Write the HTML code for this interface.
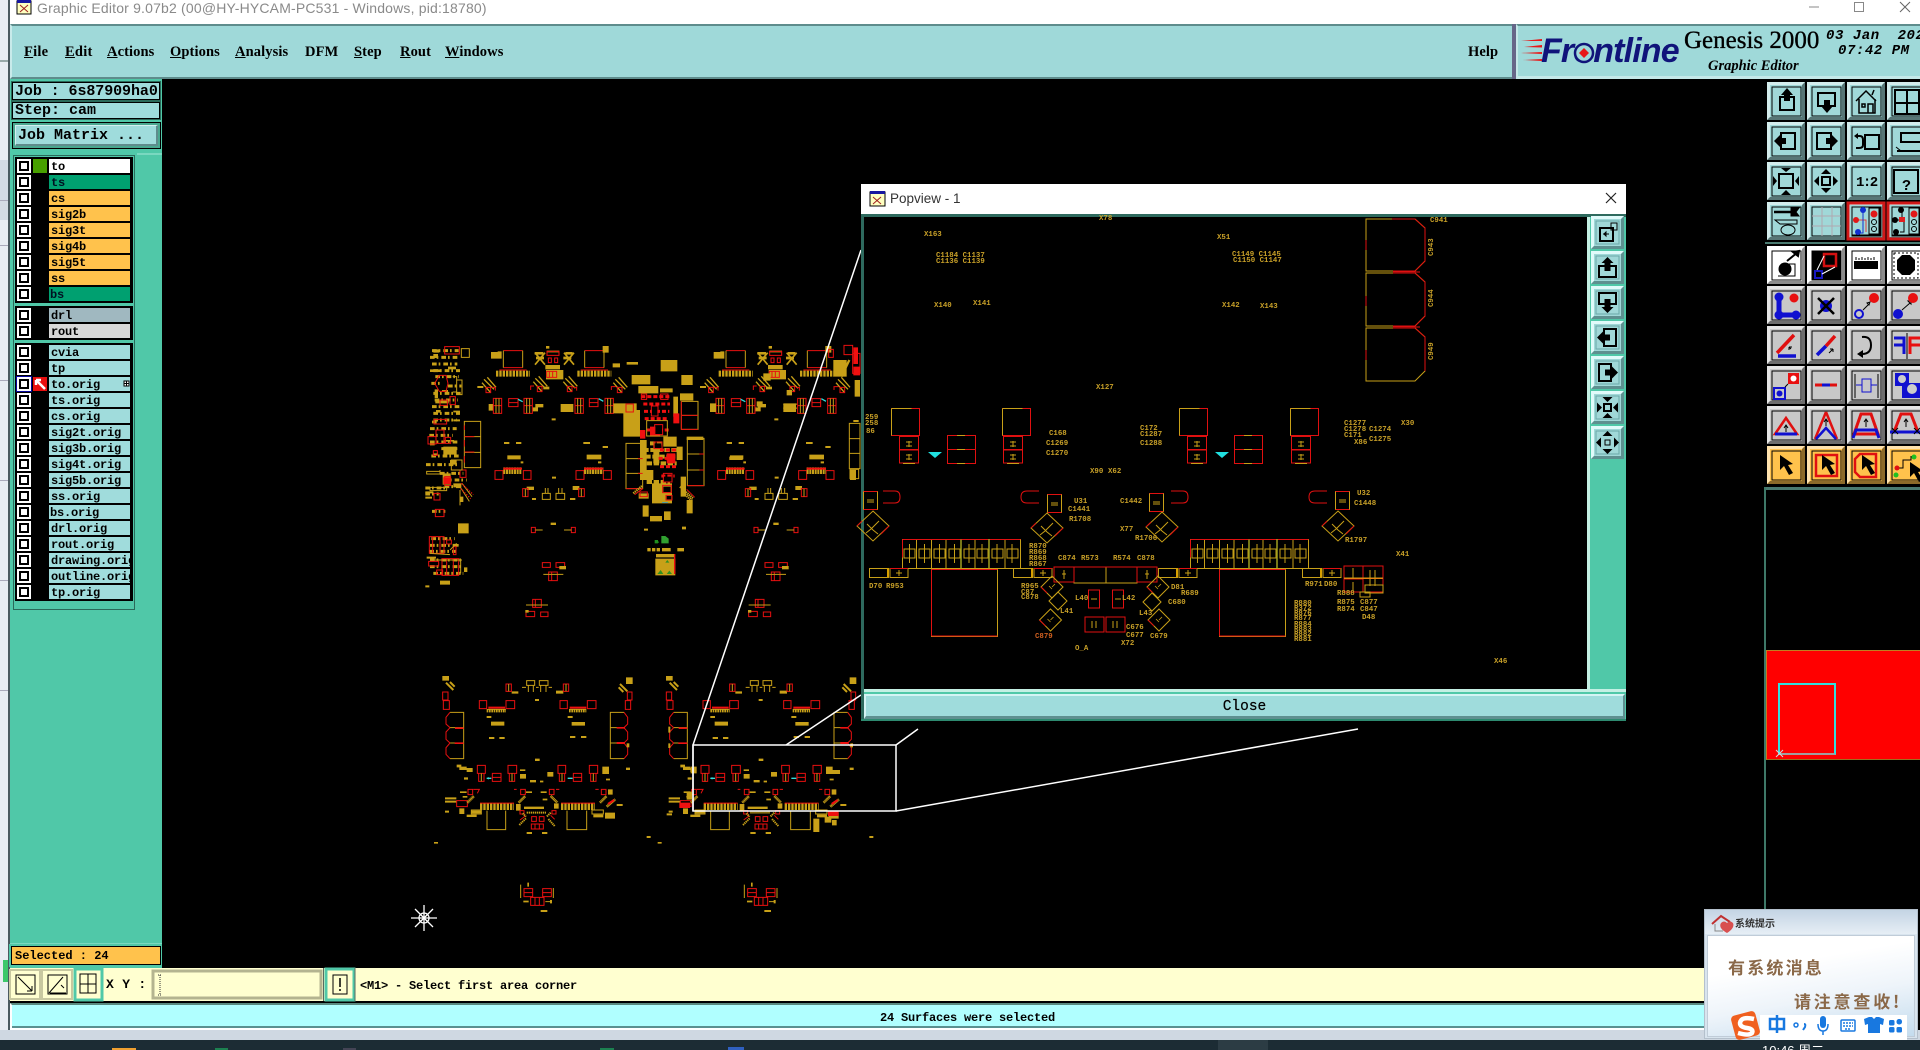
<!DOCTYPE html>
<html><head><meta charset="utf-8"><title>Graphic Editor</title>
<style>
html,body{margin:0;padding:0;background:#000;width:1920px;height:1050px;overflow:hidden}
div,span{position:absolute;box-sizing:border-box}
#root{left:0;top:0;width:1920px;height:1050px;overflow:hidden;background:#000}
.m{font-family:"Liberation Mono",monospace;font-weight:bold;color:#000;white-space:pre}
.s{font-family:"Liberation Serif",serif;font-weight:bold;color:#000;white-space:pre}
.u{position:static;text-decoration:underline}
.c{width:14px;height:14px;background:#fff;left:17px}
.c:after{content:"";position:absolute;left:2px;top:2px;width:10px;height:10px;border:2px solid #000;background:#fff;box-sizing:border-box}
.n{left:49px;width:81px;height:14px;font-size:12px;line-height:16px;padding-left:2px;letter-spacing:-.2px;overflow:hidden;background:#a0dcdc}
.o{background:#ffc24c}
.g{background:#00a070;color:#012}
svg{position:absolute;left:0;top:0}
.y{fill:none;stroke:#c8a018;stroke-width:3}
.r{fill:none;stroke:#e81010;stroke-width:3}
.Y{fill:#c8a018}.R{fill:#f01010}
.t text{font-family:"Liberation Mono",monospace;font-weight:bold;font-size:7.4px;fill:#c8a028}
.a{fill:none;stroke:#000;stroke-width:2}
.k{fill:#000}
.e{fill:none;stroke:#c8a018;stroke-width:1}
.f{fill:none;stroke:#e01010;stroke-width:1}
</style></head><body>
<div id="root">
<!-- desktop sliver -->
<div style="left:0;top:0;width:8px;height:1040px;background:#e8edf3"></div>
<div style="left:0;top:60px;width:8px;height:2px;background:#9aa"></div>
<div style="left:0;top:160px;width:8px;height:60px;background:#d4dbe4"></div>
<div style="left:0;top:245px;width:8px;height:1px;background:#aab"></div>
<div style="left:0;top:200px;width:8px;height:1px;background:#aab"></div>
<div style="left:0;top:380px;width:8px;height:1px;background:#aab"></div>
<div style="left:0;top:480px;width:8px;height:1px;background:#aab"></div>
<div style="left:0;top:580px;width:8px;height:1px;background:#aab"></div>
<div style="left:0;top:690px;width:8px;height:1px;background:#aab"></div>
<div style="left:3px;top:960px;width:5px;height:22px;background:#3cc86a"></div>
<div style="left:8px;top:0;width:2px;height:1032px;background:#4a5a60"></div>
<div style="left:0;top:1030px;width:1920px;height:10px;background:#cfd8e2"></div>
<!-- taskbar -->
<div style="left:0;top:1040px;width:1920px;height:10px;background:#1c2c34"></div>
<div style="left:112px;top:1048px;width:24px;height:2px;background:#f0a030"></div>
<div style="left:215px;top:1048px;width:13px;height:2px;background:#1c8050"></div>
<div style="left:343px;top:1048px;width:13px;height:2px;background:#445"></div>
<div style="left:600px;top:1048px;width:14px;height:2px;background:#1c8050"></div>
<div style="left:728px;top:1047px;width:16px;height:3px;background:#3060c0"></div>
<div style="left:1218px;top:1040px;width:50px;height:10px;background:#2c3c44"></div>
<div style="left:1762px;top:1042px;font:13px/18px 'Liberation Sans','Noto Sans CJK SC',sans-serif;color:#fff;white-space:pre">10:46 周二</div>
<!-- title bar -->
<div style="left:10px;top:0;width:1910px;height:24px;background:#fff"></div>
<svg width="1920" height="30"><rect x="17" y="1" width="14" height="13" fill="#ffffc0" stroke="#000"/><rect x="17" y="0" width="14" height="3" fill="#1818a0"/><path d="M20 5l8 7M28 5l-8 7" stroke="#a02020" fill="none"/><path d="M1809 7h10" stroke="#888"/><rect x="1854.500" y="2.500" width="9" height="9" fill="none" stroke="#888"/><path d="M1900 2l10 10M1910 2l-10 10" stroke="#666"/></svg>
<div style="left:37px;top:0;height:16px;font:14px/16px 'Liberation Sans',sans-serif;color:#8a8a8a;white-space:pre;letter-spacing:.18px">Graphic Editor 9.07b2 (00@HY-HYCAM-PC531 - Windows, pid:18780)</div>
<!-- menu bar -->
<div style="left:10px;top:24px;width:1505px;height:55px;background:#9fd9d9;border:2px solid #5e8c8c;border-left:2px solid #c8eaea;border-bottom:2px solid #5e8c8c"></div>
<div style="left:1512px;top:24px;width:4px;height:55px;background:#668"></div>
<div style="left:1516px;top:24px;width:404px;height:55px;background:#9fd9d9;border-top:2px solid #5e8c8c;border-bottom:3px solid #c4e8e8;border-left:2px solid #c4e8e8"></div>
<div class="s" style="left:24px;top:43px;font-size:14.500px;line-height:18px;letter-spacing:.25px"><span class="u">F</span>ile</div>
<div class="s" style="left:65px;top:43px;font-size:14.500px;line-height:18px;letter-spacing:.25px"><span class="u">E</span>dit</div>
<div class="s" style="left:107px;top:43px;font-size:14.500px;line-height:18px;letter-spacing:.1px"><span class="u">A</span>ctions</div>
<div class="s" style="left:170px;top:43px;font-size:14.500px;line-height:18px;letter-spacing:.1px"><span class="u">O</span>ptions</div>
<div class="s" style="left:235px;top:43px;font-size:14.500px;line-height:18px;letter-spacing:.1px"><span class="u">A</span>nalysis</div>
<div class="s" style="left:305px;top:43px;font-size:14.500px;line-height:18px;letter-spacing:.1px">DFM</div>
<div class="s" style="left:354px;top:43px;font-size:14.500px;line-height:18px;letter-spacing:.1px"><span class="u">S</span>tep</div>
<div class="s" style="left:400px;top:43px;font-size:14.500px;line-height:18px;letter-spacing:.1px"><span class="u">R</span>out</div>
<div class="s" style="left:445px;top:43px;font-size:14.500px;line-height:18px;letter-spacing:.1px"><span class="u">W</span>indows</div>
<div class="s" style="left:1468px;top:43px;font-size:14.500px;line-height:18px;letter-spacing:.1px">Help</div>
<!-- logo -->
<div style="left:1541px;top:32px;font:italic bold 34px/38px 'Liberation Sans',sans-serif;color:#10147a;letter-spacing:-.85px;white-space:pre">Frontline</div>
<svg width="1920" height="90"><path d="M1521 41l21-2v2zM1524 47l18-2v2.500zM1521 53l21-1v2zM1523 60l19-1v2z" fill="#e81818"/><circle cx="1584" cy="53" r="9" fill="#9fd9d9" stroke="#10147a" stroke-width="2.500"/><path d="M1584 48l5 5-5 5-5-5z" fill="#e81818"/></svg>
<div style="left:1684px;top:26px;font:25px/30px 'Liberation Serif',serif;color:#000;white-space:pre;-webkit-text-stroke:.35px #000">Genesis 2000</div>
<div class="s" style="left:1708px;top:57px;font-size:14.500px;line-height:18px;font-style:italic">Graphic Editor</div>
<div class="m" style="left:1826px;top:28px;font-size:14px;line-height:16px;font-style:italic;letter-spacing:.55px">03 Jan  2024</div>
<div class="m" style="left:1838px;top:43px;font-size:14px;line-height:16px;font-style:italic;letter-spacing:.55px">07:42 PM</div>
<!-- left panel -->
<div style="left:10px;top:79px;width:152px;height:890px;background:#50c8a8"></div>
<div class="m" style="left:12px;top:82px;width:148px;height:18px;background:#9fdcdc;border:1px solid #000;outline:1px solid #2a6a5a;font-size:15px;line-height:17px;padding-left:2px;letter-spacing:-.08px">Job : 6s87909ha0</div>
<div class="m" style="left:12px;top:102px;width:148px;height:17px;background:#9fdcdc;border:1px solid #000;outline:1px solid #2a6a5a;font-size:15px;line-height:16px;padding-left:2px">Step: cam</div>
<div style="left:12px;top:122px;width:149px;height:27px;background:#4aa890;border:1px solid #000"></div>
<div class="m" style="left:15px;top:125px;width:143px;height:21px;background:#9fdcdc;border-top:1px solid #d4f0f0;border-left:1px solid #d4f0f0;border-right:2px solid #5e8c8c;border-bottom:2px solid #5e8c8c;font-size:15px;line-height:20px;padding-left:2px">Job Matrix ...</div>
<div style="left:13px;top:155px;width:122px;height:455px;background:#50c8a8;border:1px solid #2a6a5a"></div>
<div style="left:15px;top:157px;width:118px;height:146px;background:#000"></div>
<div style="left:15px;top:306px;width:118px;height:34px;background:#000"></div>
<div style="left:15px;top:343px;width:118px;height:258px;background:#000"></div>
<div style="left:137px;top:153px;width:25px;height:792px;background:#50c8a8;border-top:2px solid #7ad8c0"></div>
<div class="c" style="top:159px"></div><div style="left:33px;top:159px;width:14px;height:14px;background:#48a000"></div><div class="n m" style="top:159px;background:#fff">to</div>
<div class="c" style="top:175px"></div><div class="n m g" style="top:175px">ts</div>
<div class="c" style="top:191px"></div><div class="n m o" style="top:191px">cs</div>
<div class="c" style="top:207px"></div><div class="n m o" style="top:207px">sig2b</div>
<div class="c" style="top:223px"></div><div class="n m o" style="top:223px">sig3t</div>
<div class="c" style="top:239px"></div><div class="n m o" style="top:239px">sig4b</div>
<div class="c" style="top:255px"></div><div class="n m o" style="top:255px">sig5t</div>
<div class="c" style="top:271px"></div><div class="n m o" style="top:271px">ss</div>
<div class="c" style="top:287px"></div><div class="n m g" style="top:287px;padding-left:1px">bs</div>
<div class="c" style="top:308px"></div><div class="n m" style="top:308px;background:#a0b8c0">drl</div>
<div class="c" style="top:324px"></div><div class="n m" style="top:324px;background:#d8d8d8">rout</div>
<div class="c" style="top:345px"></div><div class="n m" style="top:345px">cvia</div>
<div class="c" style="top:361px"></div><div class="n m" style="top:361px">tp</div>
<div style="left:16px;top:376px;width:16px;height:16px;background:#0808a0"></div><div class="c" style="top:377px"></div><div style="left:33px;top:377px;width:14px;height:14px;background:#e81010"></div><div class="n m" style="top:377px">to.orig</div>
<div class="c" style="top:393px"></div><div class="n m" style="top:393px">ts.orig</div>
<div class="c" style="top:409px"></div><div class="n m" style="top:409px">cs.orig</div>
<div class="c" style="top:425px"></div><div class="n m" style="top:425px">sig2t.orig</div>
<div class="c" style="top:441px"></div><div class="n m" style="top:441px">sig3b.orig</div>
<div class="c" style="top:457px"></div><div class="n m" style="top:457px">sig4t.orig</div>
<div class="c" style="top:473px"></div><div class="n m" style="top:473px">sig5b.orig</div>
<div class="c" style="top:489px"></div><div class="n m" style="top:489px">ss.orig</div>
<div class="c" style="top:505px"></div><div class="n m" style="top:505px;padding-left:1px">bs.orig</div>
<div class="c" style="top:521px"></div><div class="n m" style="top:521px">drl.orig</div>
<div class="c" style="top:537px"></div><div class="n m" style="top:537px">rout.orig</div>
<div class="c" style="top:553px"></div><div class="n m" style="top:553px">drawing.orig</div>
<div class="c" style="top:569px"></div><div class="n m" style="top:569px">outline.orig</div>
<div class="c" style="top:585px"></div><div class="n m" style="top:585px">tp.orig</div>
<svg width="140" height="400" style="z-index:2"><path d="M36 380l9 9M36 380h5M36 380v5" stroke="#fff" stroke-width="2.500" fill="none"/><path d="M124 381h5v5h-5zM126.500 381v5M124 383.500h5" stroke="#000" fill="#fff"/></svg>
<div style="left:10px;top:943px;width:152px;height:2px;background:#7ad8c0"></div>
<div class="m o" style="left:11px;top:946px;width:150px;height:19px;border:1px solid #000;font-size:12px;line-height:18px;padding-left:3px;outline:2px solid #50c8a8">Selected : 24</div>
<!-- canvas -->
<div style="left:162px;top:79px;width:1602px;height:889px;background:#000"></div>
<svg width="1920" height="1050" style="left:0;top:0">
<defs>
<g id="bar"><path class="r" d="M22 2h58M22 53h58"/><path class="y" d="M22 2v51M80 2v51"/><path d="M0 71h102" fill="none" stroke="#c8a018" stroke-width="18" stroke-dasharray="7 3"/><path class="r" d="M10 60h82"/></g>
<g id="bx"><path class="r" d="M0 22v23h25v-23M0 0h25v22H0z"/><path class="y" d="M8 0v45M17 0v45"/></g>
<g id="cross"><path d="M0 0l30 30M10 -6l26 30M-6 10l26 30" stroke="#c8a018" stroke-width="4" fill="none"/><path class="r" d="M6 24h14v16H6z"/></g>
<g id="U">
<use href="#bar" x="228" y="60"/><use href="#bar" x="472" y="60"/>
<path class="Y" d="M213 66h20v20h-20zM233 64h12v22h-12zM548 48h18v20h-18zM578 100h22v12h-22zM206 222h14v20h-14zM346 222h24v10h-24zM338 232h16v12h-16zM422 222h38v24h-38z"/>
<path class="Y" d="M344 66h26v8h-26zM348 80h24v8h-24zM430 80h24v8h-24zM436 66h22v8h-22zM378 48h10v8h-10zM380 62h38v5h-38zM376 105h44v13h-44zM378 120h52v28h-52zM172 168h18v6h-18zM370 170h18v8h-18zM395 265h12v6h-12zM396 440h12v6h-12zM392 578h16v7h-16zM252 336h16v6h-16zM288 336h16v6h-16zM490 336h20v6h-20zM548 348h16v6h-16zM262 376h40v12h-40zM500 374h44v14h-44zM302 394h8v6h-8zM534 394h10v6h-10zM320 470h22v10h-22zM458 468h20v12h-20zM336 504h12v6h-12zM450 504h16v6h-16z"/>
<g transform="translate(345 68)"><path d="M0 0l30 36M30 0L0 36" stroke="#c8a018" stroke-width="5" fill="none"/></g>
<g transform="translate(432 68)"><path d="M0 0l30 36M30 0L0 36" stroke="#c8a018" stroke-width="5" fill="none"/></g>
<use href="#cross" x="346" y="145"/><use href="#cross" x="436" y="145"/><use href="#cross" x="192" y="148"/><use href="#cross" x="586" y="148"/>
<path class="r" d="M381 64h36v12h-36zM385 84h9v14h-9zM404 84h9v14h-9zM380 124h30v18h-30zM388 124v18M398 124v18M332 180v-12h10M216 172h10v10M460 172h10v10M574 180v-10h14"/>
<use href="#bx" x="220" y="205"/><use href="#bx" x="312" y="205"/><use href="#bx" x="465" y="205"/><use href="#bx" x="555" y="205"/>
<path class="r" d="M266 206h28v24h-28zM266 218h28M508 206h26v24h-26zM508 218h26M225 422h24v26h-24zM310 422h23v26h-23zM468 422h24v26h-24zM550 422h24v26h-24z"/>
<path d="M294 208l14 7M536 206l14 8" stroke="#30e0e0" stroke-width="4"/>
<path d="M250 422h56M492 422h58" stroke="#c8a018" stroke-width="20" stroke-dasharray="6 2"/>
<path d="M250 416h56M492 416h58" stroke="#f01010" stroke-width="6"/>
<path class="r" d="M308 476h16v24h-16zM476 476h17v24h-17z"/><path class="y" d="M316 476v24M484 476v24M367 490h24v18h-24zM408 490h26v18h-26zM376 474v16M384 474v16M416 474v16M426 474v16"/>
<path class="r" d="M334 592h12v16h-12zM454 592h12v16h-12z"/><path class="y" d="M346 600h22M432 600h22"/>
<path class="r" d="M367 698h24v14h-24zM408 698h26v14h-26zM386 726h26v26h-26zM395 726v26"/><path class="y" d="M370 733h60"/><path class="Y" d="M418 708h20v10h-20z"/>
<path class="r" d="M338 808h26v24h-26zM346 808v24M318 844h26v16h-26zM362 846h22v14h-22z"/><path class="y" d="M318 825h66"/><path class="Y" d="M316 840h10v8h-10z"/>
</g>
<g id="B">
<path class="Y" d="M67 48h20v14h-20zM618 52h20v20h-20zM275 94h20v7h-20zM408 92h22v9h-22zM200 168h14v6h-14zM213 185h40v12h-40zM207 231h16v6h-16zM238 231h16v6h-16zM345 117h12v6h-12zM443 168h15v6h-15zM455 186h40v11h-40zM450 228h16v6h-16zM483 228h16v6h-16zM345 296h14v7h-14zM110 314h14v8h-14zM118 320h22v10h-22zM140 324h18v12h-18zM132 352h12v7h-12zM300 328h16v5h-16zM300 342h18v14h-18zM330 360h18v7h-18zM360 362h10v5h-10zM382 336h18v14h-18zM547 320h20v22h-20zM558 356h12v5h-12zM618 323h12v7h-12zM120 394h20v5h-20zM128 408h14v5h-14zM318 394h18v5h-18zM362 394h18v5h-18zM368 416h14v5h-14zM564 388h14v16h-14zM75 412h34v6h-34zM75 422h34v6h-34zM118 445h15v17h-15zM75 452h12v6h-12zM154 452h30v8h-30zM140 464h30v7h-30zM288 432h14v20h-14zM312 440h60v7h-60zM402 430h14v16h-14zM520 464h30v8h-30zM555 458h30v18h-30zM320 516h16v6h-16zM366 516h16v6h-16zM590 432h18v6h-18zM42 546h12v5h-12zM362 750h20v6h-20zM322 668h5v12h-5zM390 720h6v10h-6zM310 722h16v5h-16z"/>
<path d="M78 68l22 22M90 66l14 14M600 72l22 22M596 82l14 14" stroke="#c8a018" stroke-width="6" fill="none"/>
<path class="r" d="M68 96h16v24h-16zM70 122h18v26H70zM622 96v24h14v-24zM616 122h16v26h-16zM258 72h16v22h-16zM430 72h16v22h-16zM178 122h22v24h-22zM258 122h26v24h-26zM420 122h22v24h-22zM502 122h26v24h-26zM172 316h24v24h-24zM264 316h26v24h-26zM414 316h23v24h-23zM508 316h25v24h-25zM217 340h26v24h-26zM460 340h25v24h-25zM217 352h26M460 352h25M176 340h16v24h-16zM268 340h16v24h-16zM418 340h16v24h-16zM512 340h16v24h-16z"/>
<path class="y" d="M266 72v22M438 72v22M184 340v24M276 340v24M426 340v24M520 340v24M204 148h52M448 148h50M320 62h24v14h-24zM358 62h26v14h-26zM325 76v20M340 76v20M362 76v20M378 76v20M306 82h12M348 82h8M386 82h10"/>
<path class="R" d="M205 140h50v6h-50zM449 140h50v6h-50z"/>
<path d="M200 152h58M447 152h52" stroke="#c8a018" stroke-width="10" stroke-dasharray="5 2"/>
<path class="y" d="M90 157h41v46H90M90 203h41v46H90M90 249h41v47H90"/><path class="r" d="M90 157L78 172v20l12 11M90 203L78 216v22l12 11M90 249l-12 14v20l12 13"/>
<path class="y" d="M612 157h-41v46h41M612 203h-41v46h41M612 249h-41v47h41"/><path class="r" d="M612 157l11 15v20l-11 11M612 203l11 13v22l-11 11M612 249l11 14v20l-11 13"/>
<path class="R" d="M105 202h26v5h-26zM104 247h27v5h-27zM590 201h25v5h-25zM590 246h25v6h-25z"/><path class="Y" d="M620 250h8v12h-8z"/>
<path d="M200 355h14M443 355h15" stroke="#30e0e0" stroke-width="4"/><path d="M200 355l6-4v8z" fill="#30e0e0"/>
<path class="r" d="M144 388h14v16h-14zM282 388h8M302 388h14v16h-14zM388 388h14v16h-14zM408 388h10M526 388h10M544 388h14v16h-14zM160 388h18l-6 12M110 422h32v18h-32z"/>
<path d="M142 428l20-20M296 428l20-20M392 408l20 20M540 428l20-20M560 440l26-22" stroke="#c8a018" stroke-width="8" stroke-dasharray="3 1" fill="none"/>
<path d="M564 432l18-12" stroke="#f01010" stroke-width="6"/>
<path d="M180 440h102M423 440h102" stroke="#c8a018" stroke-width="20" stroke-dasharray="7 3"/><path class="R" d="M180 428h102v3h-102zM423 428h102v3h-102z"/>
<path class="y" d="M201 452v57h56v-57M441 452v57h59v-57M154 450h30v12h-30zM516 450h34v12h-34z"/>
<path class="r" d="M300 452h12v10h-12zM396 452h12v10h-12zM335 470h14v14h-14zM358 470h14v14h-14zM334 492h36v15h-36zM345 492v15M358 492v15M300 480l16-12M404 478l-12-12"/>
<path d="M298 495l20-20M404 498l-20-22M308 460l10 10M392 458l-12 12M320 458h60" stroke="#c8a018" stroke-width="6" stroke-dasharray="4 2" fill="none"/>
<path class="r" d="M312 686h26v24h-26zM312 698h26M368 686h26v24h-26zM368 698h26M332 712h40v24h-40zM345 712v24M358 712v24"/><path class="y" d="M302 674v40M400 684v30M376 725h18"/>
</g>
</defs>
<!-- top boards -->
<g transform="translate(420 330) scale(.33333)">
<use href="#U"/><use href="#U" x="668"/>
<!-- left column -->
<path d="M36 62h80M30 82h84M36 102h76M40 122h80M46 140h70M34 160h26M84 168h40M40 190h84M44 210h70M36 230h84M40 250h80M40 270h70M30 296h80M28 316h70M30 336h84M64 356h50M34 378h86M18 404h100M60 430h70M70 450h70M16 474h64M16 492h40M74 470h50M36 544h40M34 626h70M30 646h84M28 664h80M30 690h100M30 710h100M40 730h90" fill="none" stroke="#c8a018" stroke-width="9" stroke-dasharray="14 6 5 9"/>
<path class="Y" d="M40 58h18v10H40zM30 118h30v8H30zM40 72h14v12H40zM84 110h24v8H84zM44 178h10v26H44zM66 180h18v6H66zM46 212h40v8H46zM48 240h14v8H48zM100 242h20v5h-20zM36 272h14v8H36zM100 268h20v6h-20zM72 330h30v5H72zM30 340h14v6H30zM70 350h40v24H70zM40 370h14v6H40zM90 390h20v14H90zM68 430h24v34H68zM100 460h24v12h-24zM16 484h24v6H16zM16 500h20v6H16zM120 500h10v16h-10zM114 580h32v30h-32zM20 680h28v6H20zM60 752h30v12H60zM16 766h12v6H16zM132 712h10v14h-10zM104 642h12v8h-12z"/>
<path class="r" d="M74 50h44v22H74zM44 160l14-24h20l6 24-6 24H58zM60 210h22v16H60zM90 200h16v24H90zM42 268h38v14H42zM24 320h24v22H24zM48 300h24v40H48zM76 322h16v18H76zM40 362h12v14H40zM74 440h18v26H74zM120 420h18v22h-18zM42 490h18v20H42zM46 538h26v22H46zM28 620h44v50H28zM38 620v50M60 620v50M80 630h14v12H80zM100 650h8v24h-8zM26 694h30v14H26zM66 686h50v50H66zM80 686v50M100 686v50M50 720h18v14H50z"/>
<path class="y" d="M124 56h24v26h-24zM98 140h12v46H98M110 150h16v44h-16zM94 390h32v30H94zM20 424h40v8H20zM60 420v14M30 472h50v10H30zM126 460l30 40M120 470l28 44M120 480v46M90 660l20-20M36 690h90M30 670l60 4M122 690v40"/>
<path class="R" d="M70 442h20v20H70z"/><path d="M124 460l36 34M122 476l30 30" stroke="#e81010" stroke-width="4" stroke-dasharray="4 4"/>
<path class="y" d="M133 274h49v139h-49zM133 320h49M133 367h49"/><path class="r" d="M133 320h30M133 366h30M133 286v14M133 330v20M133 378v20"/>
<!-- center column -->
<path class="Y" d="M655 168h60v22h-60zM720 175h38v12h-38zM780 190h40v22h-40zM635 135h56v28h-56zM722 90h50v34h-50zM620 96h34v8h-34zM784 135h34v30h-34zM580 220h70v30h-70zM610 250h48v50h-48zM610 300h50v20h-50zM660 330h20v120h-20zM800 320h50v10h-50zM770 350h18v40h-18zM782 440h16v60h-16zM680 420h20v30h-20zM656 490h30v16h-30zM668 526h18v34h-18zM690 558h36v16h-36zM732 544h20v26h-20zM672 596h12v6h-12zM786 590h12v8h-12zM800 510h18v40h-18zM696 460h60v60h-60zM730 320h40v30h-40zM700 340h18v60h-18zM760 200h14v60h-14z"/>
<path d="M600 225l-20 10 18 15zM620 240h40v70h-40z" fill="#c8a018"/>
<path d="M670 360h100M676 380h90M680 400h90M690 340h70M680 456h70" fill="none" stroke="#c8a018" stroke-width="12" stroke-dasharray="16 5"/>
<path d="M664 200h90M670 222h80M672 244h76M674 266h70M680 300h70M720 360h50M716 385h50M720 410h50M724 438h40" fill="none" stroke="#f01010" stroke-width="9" stroke-dasharray="12 6"/>
<path class="R" d="M690 290h30v30h-30zM740 370h26v30h-26zM660 300h16v26h-16zM760 250h18v30h-18z"/>
<path class="k" d="M696 230h16v26h-16zM706 286h20v26h-20zM704 340h20v14h-20zM732 440h24v16h-24zM730 470h22v16h-22zM740 498h14v10h-14z"/>
<path class="r" d="M694 228h20v30h-20zM704 284h24v30h-24zM702 336h24v20h-24zM730 430h26v26h-26zM728 466h26v22h-26zM738 496h18v14h-18zM664 192h16v16h-16zM722 192h22v16h-22zM618 222h22v24h-22zM660 486h22v14h-22z"/>
<path class="y" d="M680 272h62v46h-62zM618 340h50v136h-50zM618 386h50M618 430h50M802 325h50v142h-50zM802 372h50M802 420h50M784 214h50v84h-50zM784 256h50"/>
<path class="r" d="M784 214v84M834 256h-50M784 298h50M668 386h-14M668 430h-14M618 476h50M852 372h-14M852 420h-14M852 467h-50"/>
<path d="M780 470l40 36M786 486l30 26M640 490l26-22" stroke="#c8a018" stroke-width="7" stroke-dasharray="4 2" fill="none"/>
<path d="M800 478l24 24M644 494l24-18" stroke="#e81010" stroke-width="3" fill="none"/>
<path d="M726 518h18" stroke="#20a0e0" stroke-width="2"/>
<path d="M708 634h8v5h-8zM704 630h10v10h-10z" fill="#209020"/><path d="M724 618h12l10 8v14h-22z" fill="#30a030"/>
<path class="Y" d="M682 654h10v10h-10zM696 654h10v10h-10zM710 654h10v10h-10zM726 654h26v10h-26zM772 654h20v10h-20zM708 672h56v10h-56zM706 686h60v50h-60z"/><path class="R" d="M762 672h4v60h-4z"/><path d="M712 732l10-12 8 12zM736 698l6-8 6 8zM740 732l8-10 8 10z" fill="#309020"/>
<!-- right edge -->
<path class="Y" d="M1240 90h40v50h-40zM1100 180h16v16h-16zM1304 150h16v50h-16zM1090 220h40v5h-40zM1090 232h40v5h-40zM1340 260h4v40h-4zM1290 420h18v30h-18zM1300 270h16v6h-16zM870 220h18v26h-18zM1010 214h18v16h-18zM928 380h40v10h-40zM1030 130h22v22h-22z"/>
<path d="M1264 140l24-50" stroke="#c8a018" stroke-width="7"/>
<path class="r" d="M1272 46h26v28h-26zM1226 58h14v24h-14zM1298 70h22v60h-22z"/><path class="R" d="M1300 52h14v50h-14zM1300 110h20v26h-20z"/>
<path class="y" d="M1288 280h32v136h-32zM1288 326h32M1288 370h32M1290 418h26v28h-26z"/>
</g>
<!-- bottom boards -->
<g transform="translate(420 660) scale(.33333)"><use href="#B"/><use href="#B" x="671"/>
<path class="Y" d="M800 395h16v24h-16zM1236 330h24v12h-24zM1180 476h18v40h-18zM1214 470h20v18h-20zM1236 480h14v16h-14zM812 320h18v20h-18zM680 528h12v6h-12zM1348 528h12v6h-12zM740 460h16v6h-16zM745 200h6v18h-6zM745 250h6v14h-6z"/>
<path class="R" d="M778 428h32v16h-32zM1224 454h32v14h-32z"/></g>
<!-- selection outline -->
<g fill="none" stroke="#fff" stroke-width="1.500">
<path d="M693 745h203v66H693z"/><path d="M693 745L861 250"/><path d="M786 745L861 695"/><path d="M896 745L918 729"/><path d="M896 811L1358 729"/><path d="M693 811v-66"/>
</g>
<!-- crosshair -->
<g stroke="#fff" stroke-width="1.300" fill="none"><path d="M424 905v26M411 918h26M415 909l18 18M433 909l-18 18"/><circle cx="424" cy="918" r="5"/></g>
</svg>
<!-- right side black, tools -->
<div style="left:1764px;top:79px;width:156px;height:830px;background:#000"></div>
<div style="left:1764px;top:487px;width:156px;height:3px;background:#4a7a70"></div>
<div style="left:1764px;top:487px;width:2px;height:422px;background:#3e7868"></div>
<div style="left:1766px;top:650px;width:154px;height:110px;background:#ff0000;border-top:1px solid #c08020;border-left:1px solid #c08020;border-bottom:1px solid #a07020"></div>
<div style="left:1778px;top:683px;width:58px;height:72px;border:2px solid #30e0e0;border-bottom-color:#a0a0a0"></div>
<svg width="1920" height="1050">
<path d="M1776 750l7 7M1783 750l-7 7" stroke="#cdd" fill="none"/>
<defs><g id="b"><rect width="38" height="38"/><path d="M0 0h38l-3 3H3v32l-3 3z" fill="#fff" opacity=".55"/><path d="M38 38H0l3-3h32V3l3-3z" fill="#000" opacity=".45"/><rect x="5" y="5" width="29" height="29" fill="none" stroke="#000"/></g></defs>
<g fill="#a0d8d8"><use href="#b" x="1767" y="82"/><use href="#b" x="1807" y="82"/><use href="#b" x="1847" y="82"/><use href="#b" x="1887" y="82"/><use href="#b" x="1767" y="122"/><use href="#b" x="1807" y="122"/><use href="#b" x="1847" y="122"/><use href="#b" x="1887" y="122"/><use href="#b" x="1767" y="162"/><use href="#b" x="1807" y="162"/><use href="#b" x="1847" y="162"/><use href="#b" x="1887" y="162"/><use href="#b" x="1767" y="202"/><use href="#b" x="1807" y="202"/></g>
<g fill="#a0d8d8"><use href="#b" x="1847" y="202"/><use href="#b" x="1887" y="202"/></g>
<rect x="1765" y="242" width="155" height="2" fill="#4a7a70"/>
<g fill="#fff"><use href="#b" x="1767" y="246"/><use href="#b" x="1807" y="246"/><use href="#b" x="1847" y="246"/><use href="#b" x="1887" y="246"/></g>
<g fill="#c8c8c8"><use href="#b" x="1767" y="286"/><use href="#b" x="1807" y="286"/><use href="#b" x="1847" y="286"/><use href="#b" x="1887" y="286"/><use href="#b" x="1767" y="326"/><use href="#b" x="1807" y="326"/><use href="#b" x="1847" y="326"/><use href="#b" x="1887" y="326"/><use href="#b" x="1767" y="366"/><use href="#b" x="1807" y="366"/><use href="#b" x="1847" y="366"/><use href="#b" x="1887" y="366"/><use href="#b" x="1767" y="406"/><use href="#b" x="1807" y="406"/><use href="#b" x="1847" y="406"/><use href="#b" x="1887" y="406"/></g>
<g fill="#ffc24c"><use href="#b" x="1767" y="446"/><use href="#b" x="1807" y="446"/><use href="#b" x="1847" y="446"/><use href="#b" x="1887" y="446"/></g>
<!-- row 1 -->
<g transform="translate(1767 82)"><path class="a" d="M13 15h14v13H13z"/><path class="k" d="M20 6l-6 7h3v6h6v-6h3z"/></g>
<g transform="translate(1807 82)"><path class="a" d="M11 11h17v13H11z"/><path class="k" d="M20 31l-6-7h3v-6h6v6h3z"/></g>
<g transform="translate(1847 82)" fill="none" stroke="#000" stroke-width="1.500"><path d="M9 19L19 9l10 10M12 17v14h16V17M21 31v-9h5v9M15 22h3v3h-3zM25 13l2-5"/></g>
<g transform="translate(1887 82)" fill="none" stroke="#000" stroke-width="2"><path d="M8 8h24v24H8zM8 21h24M20 8v24"/></g>
<!-- row 2 -->
<g transform="translate(1767 122)"><path class="a" d="M14 11h14v16H14z"/><path class="k" d="M7 19l6-6v3h6v6h-6v3z"/></g>
<g transform="translate(1807 122)"><path class="a" d="M10 11h14v16H10z"/><path class="k" d="M31 19l-6-6v3h-6v6h6v3z"/></g>
<g transform="translate(1847 122)"><path class="a" d="M18 13h14v14H18z"/><path class="a" d="M10 14h3q3 0 3 4v5q0 3-4 3h-3"/><path class="k" d="M7 14l4-3v6z"/></g>
<g transform="translate(1887 122)"><path class="a" d="M36 11H14v9h20v9H10"/><path d="M34 12l4-3M9 25l5 4" stroke="#000" fill="none"/></g>
<!-- row 3 -->
<g transform="translate(1767 162)"><path class="a" d="M12 12h14v14H12z"/><path class="k" d="M19 10l-5-4h10zM19 28l-5 5h10zM10 19l-4-5v10zM28 19l4-5v10z"/></g>
<g transform="translate(1807 162)"><path class="a" d="M15 15h8v8h-8z"/><path class="k" d="M19 7l-5 5h10zM19 31l-5-5h10zM7 19l5-5v10zM31 19l-5-5v10z"/></g>
<g transform="translate(1847 162)"><text x="9" y="24" font-family="Liberation Mono,monospace" font-weight="bold" font-size="14" letter-spacing="-1.500">1:2</text></g>
<g transform="translate(1887 162)"><path class="a" d="M7 8h24v23H7z"/><text x="15" y="28" font-family="Liberation Mono,monospace" font-weight="bold" font-size="15">?</text></g>
<!-- row 4 -->
<g transform="translate(1767 202)" fill="none" stroke="#000"><path d="M7 10h18" stroke-width="2.500"/><path d="M24 6h8l-3 4 3 4h-8z" fill="#000"/><path d="M8 18h22v4H13z"/><ellipse cx="21" cy="28" rx="7" ry="5"/></g>
<g transform="translate(1807 202)" fill="none" stroke="#b0a8b0"><path d="M5 14h29M5 24h29M15 5v29M25 5v29"/></g>
<g transform="translate(1847 202)"><rect x="1" y="1" width="36" height="36" fill="none" stroke="#d01818" stroke-width="3"/><rect x="5" y="5" width="28" height="28" fill="none" stroke="#000"/><path d="M10 18h9v12" stroke="#e04040" fill="none"/><path d="M16 9v22h-3" stroke="#1030d0" fill="none"/><circle cx="16" cy="8" r="3" fill="#1030d0"/><circle cx="9" cy="18" r="3" fill="#e01818"/><circle cx="11" cy="30" r="3" fill="#1030d0"/><rect x="22" y="6" width="10" height="26" fill="none" stroke="#000"/><circle cx="27" cy="12" r="3.500" fill="#e01818"/><circle cx="27" cy="20" r="2.500" fill="none" stroke="#000"/><circle cx="27" cy="27" r="2.500" fill="none" stroke="#000"/></g>
<g transform="translate(1887 202)"><rect x="1" y="1" width="36" height="36" fill="none" stroke="#d01818" stroke-width="3"/><rect x="5" y="5" width="28" height="28" fill="none" stroke="#000"/><path d="M8 18h9v12h-4M15 9v9" stroke="#000" fill="none"/><circle cx="14" cy="8" r="3"/><circle cx="8" cy="18" r="3"/><circle cx="9" cy="30" r="3"/><rect x="12" y="15" width="6" height="5" fill="#e02020"/><rect x="22" y="6" width="10" height="26" fill="none" stroke="#000"/><circle cx="27" cy="12" r="3.500" fill="#e01818"/><circle cx="27" cy="20" r="2.500" fill="none" stroke="#000"/><circle cx="27" cy="27" r="2.500" fill="none" stroke="#000"/></g>
<!-- row 5 -->
<g transform="translate(1767 246)"><circle cx="18" cy="23" r="6.500"/><path d="M14 18h14v12H11" fill="none" stroke="#000"/><path d="M20 15l11-9M32 5l-6 1 5 4z" stroke="#000" stroke-width="2" fill="#000"/></g>
<g transform="translate(1807 246)"><rect x="5" y="5" width="29" height="29"/><rect x="17" y="8" width="12" height="12" fill="none" stroke="#d01010" stroke-width="2.500"/><rect x="8" y="25" width="7" height="7" fill="none" stroke="#1818c0" stroke-width="2"/><path d="M10 24l7-14M15 28l13-7" stroke="#fff" fill="none"/></g>
<g transform="translate(1847 246)"><path d="M7 15h24v8H7z"/><path d="M9 14v-3M12 14v-2M15 14v-3M18 14v-2M21 14v-3M24 14v-2M27 14v-3" stroke="#000" fill="none"/></g>
<g transform="translate(1887 246)"><path d="M12 13l5-5h8l5 5v10l-5 5h-8l-5-5z" transform="translate(-2 1)"/><path d="M7 7h24v25H7z" fill="none" stroke="#000" stroke-dasharray="2 2"/></g>
<!-- row 6 -->
<g transform="translate(1767 286)" fill="#1010d0"><path d="M12 12v17h15" fill="none" stroke="#1010d0" stroke-width="5"/><circle cx="12" cy="11" r="4.500"/><circle cx="12" cy="29" r="4.500"/><circle cx="29" cy="29" r="4.500"/><circle cx="27" cy="12" r="4.500" fill="#e81010"/></g>
<g transform="translate(1807 286)"><circle cx="19" cy="20" r="6" fill="#1010d0"/><path d="M11 12l16 16M27 12L11 28" stroke="#000" stroke-width="2.500"/></g>
<g transform="translate(1847 286)"><circle cx="12" cy="28" r="4" fill="none" stroke="#1010d0" stroke-width="2"/><path d="M16 24l6-6M20 17l3-1-1 3z" stroke="#000" fill="none"/><circle cx="27" cy="12" r="5" fill="#e81010"/></g>
<g transform="translate(1887 286)"><circle cx="11" cy="28" r="5" fill="#1010d0"/><path d="M15 24l8-7M21 15l3 0 0 3z" stroke="#000" fill="none"/><circle cx="26" cy="12" r="5" fill="#e81010"/></g>
<!-- row 7 -->
<g transform="translate(1767 326)"><path d="M10 27L27 9" stroke="#e01010" stroke-width="3.500"/><path d="M11 30h18" stroke="#1010d0" stroke-width="3.500"/><path d="M24 23l-2-2M22 21h3M22 21v3" stroke="#000" fill="none"/></g>
<g transform="translate(1807 326)"><path d="M10 29l9-9" stroke="#1010d0" stroke-width="3.500"/><path d="M19 20l9-10" stroke="#e01010" stroke-width="3.500"/><path d="M22 27l4-4M26 23h-3M26 23v3" stroke="#000" fill="none"/></g>
<g transform="translate(1847 326)"><path d="M15 11q9-1 9 8t-9 9" stroke="#000" stroke-width="2" fill="none"/><path d="M10 28l6-4v8z" fill="#000"/></g>
<g transform="translate(1887 326)"><path d="M7 12h10v16M7 19h10" stroke="#1010d0" stroke-width="3" fill="none"/><path d="M20 7v26" stroke="#000"/><path d="M33 12H23v16M23 19h10" stroke="#e81010" stroke-width="3" fill="none"/></g>
<!-- row 8 -->
<g transform="translate(1767 366)"><rect x="21" y="7" width="11" height="11" fill="#e81010"/><circle cx="26.500" cy="12.500" r="3" fill="#fff"/><rect x="7" y="22" width="11" height="11" fill="none" stroke="#1010d0" stroke-width="2"/><circle cx="12.500" cy="27.500" r="3" fill="#1010d0"/><path d="M18 21l3-3" stroke="#000"/></g>
<g transform="translate(1807 366)"><path d="M8 19h22" stroke="#e01010" stroke-width="3"/><path d="M15 19h8" stroke="#1010d0" stroke-width="3"/></g>
<g transform="translate(1847 366)" fill="none"><path d="M8 8v24M31 8v24" stroke="#000"/><rect x="15" y="13" width="9" height="13" stroke="#1010d0"/><path d="M9 19h6M24 19h6" stroke="#1010d0"/></g>
<g transform="translate(1887 366)"><path d="M8 7h14v10h12v15H15V20H8z" fill="#1010d0"/><circle cx="15" cy="13" r="4" fill="#ccc"/><circle cx="25" cy="23" r="5" fill="#ccc"/></g>
<!-- row 9 -->
<g transform="translate(1767 406)"><path d="M19 12L8 28h22z" fill="none" stroke="#e01010" stroke-width="2.500"/><path d="M8 28h22" stroke="#1010d0" stroke-width="3"/><path d="M19 26v-6M17 22l2-3 2 3" stroke="#000" fill="none"/></g>
<g transform="translate(1807 406)"><path d="M19 6L8 33M19 6l11 27" fill="none" stroke="#e01010" stroke-width="2.500"/><path d="M9 33l10-11 10 11" fill="none" stroke="#1010d0" stroke-width="2.500"/><path d="M19 20v-6M17 16l2-3 2 3" stroke="#000" fill="none"/></g>
<g transform="translate(1847 406)"><path d="M14 8h10l7 20H7z" fill="none" stroke="#e01010" stroke-width="3"/><path d="M6 32l3-8h20l3 8" fill="none" stroke="#1010d0" stroke-width="3"/><path d="M19 21v-7M17 16l2-3 2 3" stroke="#000" fill="none"/></g>
<g transform="translate(1887 406)"><path d="M14 8h10l7 18H7z" fill="none" stroke="#e01010" stroke-width="3"/><path d="M3 26h33" stroke="#1010d0" stroke-width="3"/><path d="M5 22l6 6M11 22l-6 6M27 22l6 6M33 22l-6 6" stroke="#000"/><path d="M19 21v-7M17 16l2-3 2 3" stroke="#000" fill="none"/></g>
<!-- row 10 -->
<g transform="translate(1767 446)"><path class="k" d="M13 9v15l4-4 5 9 4-2-5-8 5-1z"/></g>
<g transform="translate(1807 446)"><rect x="9" y="9" width="21" height="21" fill="none" stroke="#e01010" stroke-width="2.500"/><path class="k" d="M15 9v15l4-4 5 9 4-2-5-8 5-1z"/></g>
<g transform="translate(1847 446)"><path d="M13 8h16v23H13l-5-5V13z" fill="none" stroke="#e01010" stroke-width="2.500"/><path class="k" d="M15 9v15l4-4 5 9 4-2-5-8 5-1z"/></g>
<g transform="translate(1887 446)"><path d="M10 22h6V14h8V10" fill="none" stroke="#000"/><circle cx="10" cy="22" r="2.500" fill="#e01010"/><circle cx="9" cy="29" r="2.500" fill="#20c020"/><circle cx="27" cy="11" r="2.500" fill="#20c020"/><path class="k" d="M23 16v15l4-4 5 9 4-2-5-8 5-1z"/></g>
</svg>
<!-- bottom row -->
<div style="left:10px;top:968px;width:1695px;height:33px;background:#ffffd0"></div>
<div style="left:10px;top:1001px;width:1695px;height:2px;background:#000"></div>
<div style="left:10px;top:1003px;width:1695px;height:27px;background:#b0ffff;border-top:2px solid #5a8a80;border-bottom:2px solid #fff;border-left:2px solid #fff"></div>
<div style="left:12px;top:1026px;width:1693px;height:2px;background:#5a9090"></div>
<div class="m" style="left:880px;top:1010px;font-size:12px;line-height:16px;letter-spacing:-.2px">24 Surfaces were selected</div>
<svg width="1920" height="1050">
<rect x="10" y="970" width="30" height="29" fill="#ffffd0" stroke="#c8c8a0" stroke-width="2"/><rect x="16" y="975" width="19" height="19" fill="none" stroke="#000"/><path d="M18 977l14 14M32 991h-5M32 991v-5" stroke="#000" fill="none"/>
<rect x="42" y="970" width="30" height="29" fill="#ffffd0" stroke="#c8c8a0" stroke-width="2"/><rect x="48" y="975" width="19" height="19" fill="none" stroke="#000"/><path d="M49 993l14-16M50 993h16M61 985l3 3" stroke="#000" fill="none"/>
<rect x="75" y="969" width="27" height="31" fill="#ffffd0" stroke="#50c8a8" stroke-width="3"/><rect x="80" y="974" width="16" height="19" fill="none" stroke="#000"/><path d="M80 984h16M88 974v19" stroke="#000"/>
<rect x="153" y="971" width="168" height="27" fill="#ffffd0" stroke="#b4b490" stroke-width="3"/>
<path d="M160 975v20M158 975h4M158 995h4" stroke="#333" stroke-dasharray="1 1" fill="none"/>
<rect x="326" y="969" width="28" height="31" fill="#ffffd0" stroke="#50c8a8" stroke-width="3"/><rect x="333" y="975" width="14" height="19" fill="none" stroke="#000"/><path d="M340 978v9M340 989v2" stroke="#000" stroke-width="1.500"/>
<path d="M323.500 968v33M355 968v33" stroke="#5a6a60" stroke-width="1"/>
</svg>
<div class="m" style="left:106px;top:977px;font-size:13px;line-height:16px;letter-spacing:.3px">X Y :</div>
<div class="m" style="left:360px;top:978px;font-size:12px;line-height:16px;letter-spacing:-.2px">&lt;M1&gt; - Select first area corner</div>
<!-- popview -->
<div style="left:861px;top:184px;width:765px;height:30px;background:#fff"></div>
<div style="left:861px;top:214px;width:765px;height:3px;background:#2e6a5e"></div>
<div style="left:861px;top:217px;width:765px;height:503px;background:#50c8a8;border-left:3px solid #2e6a5e"></div>
<div style="left:864px;top:217px;width:723px;height:472px;background:#000"></div>
<div style="left:1587px;top:217px;width:3px;height:473px;background:#c4f0e4"></div>
<div style="left:864px;top:689px;width:762px;height:3px;background:#c4f0e4"></div>
<div class="m" style="left:864px;top:694px;width:761px;height:25px;background:#9fdcdc;border-top:2px solid #d4f4f4;border-left:2px solid #d4f4f4;border-bottom:3px solid #5e9090;border-right:2px solid #5e9090;font-size:14.500px;font-weight:normal;line-height:23px;text-align:center;-webkit-text-stroke:.2px #000">Close</div>
<div style="left:861px;top:719px;width:765px;height:2px;background:#2e8a70"></div>
<div style="left:890px;top:190px;font:13.500px/18px 'Liberation Sans',sans-serif;color:#333;white-space:pre">Popview - 1</div>
<svg width="1920" height="1050">
<rect x="870" y="192" width="15" height="14" fill="#ffffc0" stroke="#000"/><rect x="870" y="191" width="15" height="3" fill="#1818a0"/><path d="M873 197l8 7M881 197l-8 7" stroke="#a02020" fill="none"/>
<path d="M1606 193l10 10M1616 193l-10 10" stroke="#222" stroke-width="1.200"/>
<defs>
<g id="p"><rect width="33" height="33" fill="#a0d8d8"/><path d="M0 0h33l-3 3H3v27l-3 3z" fill="#e0fafa"/><path d="M33 33H0l3-3h27V3l3-3z" fill="#5e9090"/><rect x="5" y="5" width="23" height="23" fill="none" stroke="#6aa8a8"/></g>
<g id="uu"><path class="f" d="M.5 .500h28v27h-28z"/><path class="e" d="M.5 .500h20M.5 .500v27"/></g>
<g id="ca"><path class="f" d="M.5 .500h19v13h-19zM.5 14h19v13h-19z"/><path class="e" d="M4 27.500h12M10 5v6M7 6h6M7 10h6M10 18v6M7 19h6M7 23h6"/></g>
<g id="dbx"><path class="f" d="M.5 .500h28v28h-28zM.5 14.500h28"/><path class="e" d="M10 .500h8M10 14.500h8M10 28.500h8"/></g>
<g id="cp2"><path class="e" d="M.5 .500h14v18h-14zM4 9h7M4 11h7"/><path class="f" d="M.5 .500h14M.5 18.500h14"/></g>
<g id="dia"><path class="e" d="M0-15L16 0 0 15-16 0z"/><path class="f" d="M16 0L8 8M-16 0l5-5"/><path class="e" d="M-6-2L0 4M6-5L-2 3M0 4l5 4M-2 3l-5 4"/></g>
<g id="dia2"><path class="e" d="M0-11L11 0 0 11-11 0z"/><path class="f" d="M-11 0l6 6"/><path d="M-3-1l3 3M3-3l-3 3" stroke="#c8a018" stroke-width=".8"/></g>
<g id="row"><path class="e" d="M.5 .500h118v29H.5zM14.500 .500v29M29.500 .500v29M44 .500v29M59 .500v29M73 .500v29M87 .500v29M103 .500v29"/><path class="f" d="M.5 .500h118M.5 .500v18"/>
<path class="e" d="M2 10h11v9H2zM17 10h11v9H17zM32 10h11v9H32zM47 10h11v9H47zM62 10h11v9H62zM75 10h11v9H75zM90 10h11v9H90zM105 10h11v9h-11zM7.500 5v19M22.500 5v19M37.500 5v19M52.500 5v19M67 5v19M80 5v19M95 5v19M110 5v19"/><path d="M59 .5v29M87 0v29" stroke="#a0a020" stroke-width="1.500"/></g>
<g id="bb"><path class="e" d="M.5 .500h66v67h-66z"/><path class="f" d="M.5 .500h66M.5 .500v30M.5 67h66M.5 30v37"/></g>
<g id="sm"><path class="e" d="M.5 .500h19v9H.5z"/><path d="M19 0v9" stroke="#d8a000" stroke-width="2"/><path class="e" d="M21 .500h18v9H21zM30 2v6M27 5h6"/><path class="f" d="M21 .500h18"/></g>
<g id="cy"><path d="M0 0h14L7 6z" fill="#20e0e0"/></g>
</defs>
<use href="#p" x="1591" y="216"/><use href="#p" x="1591" y="251"/><use href="#p" x="1591" y="286"/><use href="#p" x="1591" y="321"/><use href="#p" x="1591" y="356"/><use href="#p" x="1591" y="391"/><use href="#p" x="1591" y="426"/>
<g transform="translate(1591 216)"><rect x="9" y="12" width="13" height="13" fill="none" stroke="#000" stroke-width="2"/><rect x="20" y="7" width="6" height="7" fill="none" stroke="#000"/><path d="M12 18h6M13 18l2-2v4z" stroke="#000" fill="none"/></g>
<g transform="translate(1591 251)"><path class="a" d="M8 15h17v11H8z"/><path class="k" d="M16.500 6l-6 6h3v8h6v-8h3z"/></g>
<g transform="translate(1591 286)"><path class="a" d="M8 7h17v11H8z"/><path class="k" d="M16.500 27l-6-6h3v-8h6v8h3z"/></g>
<g transform="translate(1591 321)"><path class="a" d="M13 8h12v17H13z"/><path class="k" d="M6 16.500l6-6v3h7v6h-7v3z"/></g>
<g transform="translate(1591 356)"><path class="a" d="M8 8h12v17H8z"/><path class="k" d="M27 16.500l-6-6v3h-7v6h7v3z"/></g>
<g transform="translate(1591 391)"><path class="a" d="M13 13h7v7h-7z"/><path class="k" d="M16.500 11l-5-5h10zM16.500 22l-5 5h10zM11 16.500l-5-5v10zM22 16.500l5-5v10z"/></g>
<g transform="translate(1591 426)"><path d="M14 14h5v5h-5z" fill="none" stroke="#000"/><path class="k" d="M16.500 5l-5 5h10zM16.500 28l-5-5h10zM5 16.500l5-5v10zM28 16.500l-5-5v10z"/></g>
<!-- popview drawing -->
<g>
<path class="e" d="M1366 219h49l10 9v33l-10 10h-49zM1366 273h49l10 9v34l-10 10h-49zM1366 328h49l10 9v34l-10 10h-49z"/>
<path class="f" d="M1392 219h23l10 9v33l-10 10h-22M1393 273h22l10 9v34l-10 10h-22M1393 328h22l10 9v34M1366 240v10M1366 296v10M1366 350v10M1415 272h5M1415 327h5"/>
<path d="M1393 271.500h22M1393 326.500h22" stroke="#e01010" stroke-width="1.500"/>
<use href="#uu" x="891" y="408"/><use href="#uu" x="1002" y="408"/><use href="#uu" x="1179" y="408"/><use href="#uu" x="1290" y="408"/>
<use href="#ca" x="899" y="436"/><use href="#ca" x="1003" y="436"/><use href="#ca" x="1187" y="436"/><use href="#ca" x="1291" y="436"/>
<use href="#dbx" x="947" y="435"/><use href="#dbx" x="1234" y="435"/>
<use href="#cy" x="928" y="452"/><use href="#cy" x="1215" y="452"/>
<use href="#cp2" x="863" y="491"/><use href="#cp2" x="1047" y="494"/><use href="#cp2" x="1149" y="493"/><use href="#cp2" x="1335" y="491"/>
<path class="f" d="M883 491h12q5 0 5 6t-5 6h-12M1171 491h12q5 0 5 6t-5 6h-12M1039 491h-12q-6 0-6 6t6 6h12M1327 491h-12q-6 0-6 6t6 6h12"/>
<use href="#dia" x="1047" y="528"/><use href="#dia" x="1162" y="527"/><use href="#dia" x="1338" y="526"/><use href="#dia" x="873" y="526"/>
<use href="#row" x="902" y="539"/><use href="#row" x="1190" y="539"/>
<use href="#bb" x="931" y="569"/><use href="#bb" x="1219" y="569"/>
<use href="#sm" x="869" y="568"/><use href="#sm" x="1013" y="568"/><use href="#sm" x="1158" y="568"/><use href="#sm" x="1302" y="568"/>
<path class="e" d="M1074 567h32v16h-32zM1106 567h31v16h-31z"/><path class="f" d="M1054 567h83M1054 567h20v15h-20zM1137 567h20v15h-20z"/><path class="e" d="M1064 570v9M1062 574h4M1147 570v9M1145 574h4"/>
<use href="#dia2" x="1052" y="587"/><use href="#dia2" x="1158" y="587"/><use href="#dia2" x="1050.500" y="620"/><use href="#dia2" x="1159" y="620"/>
<path class="e" d="M1058 592l9 9-9 9-9-9zM1152 593l9 9-9 9-9-9z"/>
<path class="f" d="M1088.500 590h11v18h-11zM1112.500 590h11v18h-11zM1085 617h19v15h-19zM1106 617h19v15h-19zM1344 566h19v13h-19zM1363 566h20v26h-20zM1344 579h19v13h-19z"/>
<path class="e" d="M1091 599h6M1115 599h6M1092 621v7M1096 621v7M1113 621v7M1117 621v7M1344 578h39M1353 568v10M1353 582v8M1370 570v16M1375 570v16M1360 592h10v5h-10zM1365 585h18v8h-18z"/>
<path d="M1344 578.500h39" stroke="#e88010"/>
</g>
<g class="t">
<text x="924" y="236">X163</text><text x="936" y="257">C1184 C1137</text><text x="936" y="263">C1136 C1139</text><text x="934" y="307">X140</text><text x="973" y="305">X141</text><text x="1217" y="239">X51</text><text x="1232" y="256">C1149 C1145</text><text x="1233" y="262">C1150 C1147</text><text x="1222" y="307">X142</text><text x="1260" y="308">X143</text><text x="1430" y="222">C941</text>
<text transform="translate(1433 256) rotate(-90)">C943</text><text transform="translate(1433 307) rotate(-90)">C944</text><text transform="translate(1433 360) rotate(-90)">C949</text>
<text x="1096" y="389">X127</text><text x="1049" y="435">C168</text><text x="1046" y="445">C1269</text><text x="1046" y="455">C1270</text><text x="1140" y="430">C172</text><text x="1140" y="436">C1287</text><text x="1140" y="445">C1288</text><text x="1344" y="425">C1277</text><text x="1344" y="431">C1278</text><text x="1344" y="437">C171</text><text x="1354" y="444">X86</text><text x="1369" y="431">C1274</text><text x="1369" y="441">C1275</text><text x="1401" y="425">X30</text><text x="865" y="419">259</text><text x="865" y="425">258</text><text x="866" y="433">86</text><text x="1090" y="473">X90</text><text x="1108" y="473">X62</text><text x="1099" y="220">X78</text>
<text x="1074" y="503">U31</text><text x="1068" y="511">C1441</text><text x="1069" y="521">R1708</text><text x="1120" y="503">C1442</text><text x="1120" y="531">X77</text><text x="1135" y="540">R1706</text><text x="1357" y="495">U32</text><text x="1354" y="505">C1448</text><text x="1345" y="542">R1797</text><text x="1396" y="556">X41</text>
<text x="1029" y="548">R870</text><text x="1029" y="554">R869</text><text x="1029" y="560">R868</text><text x="1029" y="566">R867</text>
<text x="1058" y="560">C874</text><text x="1081" y="560">R573</text><text x="1113" y="560">R574</text><text x="1137" y="560">C878</text>
<text x="869" y="588">D70</text><text x="886" y="588">R953</text><text x="1021" y="588">R965</text><text x="1021" y="594">C87</text><text x="1021" y="599">C878</text><text x="1075" y="600">L40</text><text x="1122" y="600">L42</text><text x="1171" y="589">D81</text><text x="1181" y="595">R689</text><text x="1168" y="604">C680</text><text x="1060" y="613">L41</text><text x="1139" y="615">L43</text><text x="1126" y="629">C676</text><text x="1126" y="637">C677</text><text x="1121" y="645">X72</text><text x="1150" y="638">C679</text><text x="1035" y="638" style="fill:#d06020">C879</text><text x="1075" y="650">O_A</text><text x="1305" y="586">R971</text><text x="1324" y="586">D80</text><text x="1337" y="595">R888</text><text x="1337" y="604">R875</text><text x="1337" y="611">R874</text><text x="1360" y="604">C877</text><text x="1360" y="611">C847</text><text x="1362" y="619">D48</text>
<text x="1294" y="605">R880</text><text x="1294" y="610">R372</text><text x="1294" y="615">R876</text><text x="1294" y="620">R877</text><text x="1294" y="626">R884</text><text x="1294" y="631">R883</text><text x="1294" y="636">R882</text><text x="1294" y="641">R881</text><text x="1494" y="663">X46</text>
</g>
</svg>
<!-- popup -->
<div style="left:1704px;top:909px;width:214px;height:130px;background:#d8e4ee;border:1px solid #b4c0cc"></div>
<div style="left:1705px;top:910px;width:212px;height:24px;background:linear-gradient(#c4d4e4,#e6eef5)"></div>
<div style="left:1707px;top:935px;width:208px;height:102px;background:linear-gradient(170deg,#fff 30%,#eef4fa 60%,#c4dcee 100%);border:1px solid #c0ccd8"></div>
<svg width="1920" height="1050"><path d="M1712 924l9-8 9 6" fill="none" stroke="#c03030" stroke-width="2"/><path d="M1715 924v7h8" fill="none" stroke="#888"/><path d="M1727 933q-9-5-6-10q3-3 6 0q3-3 6 0q2 5-6 10z" fill="#d85050"/></svg>
<div style="left:1735px;top:915px;font:bold 10px/16px 'Noto Sans CJK SC',sans-serif;color:#333;white-space:pre">系统提示</div>
<div style="left:1728px;top:954px;font:bold 17px/26px 'Noto Sans CJK SC',sans-serif;color:#8a6848;letter-spacing:2.200px;white-space:pre">有系统消息</div>
<div style="left:1794px;top:988px;font:bold 17px/26px 'Noto Sans CJK SC',sans-serif;color:#8a6848;letter-spacing:2.800px;white-space:pre">请注意查收!</div>
<div style="left:1760px;top:1015px;width:147px;height:25px;background:#fff"></div>
<svg width="1920" height="1050">
<rect x="1733" y="1013" width="25" height="25" rx="4" fill="#f06020" transform="rotate(-15 1745.500 1025.500)"/>
<path d="M1754 1019q-13-3-14 4 0 4 7 5 7 1 5 5-3 3-14 0" fill="none" stroke="#fff" stroke-width="4.500"/>
<g fill="#1878e0">
<path d="M1770 1019h14v10h-14z" fill="none" stroke="#1878e0" stroke-width="2.500"/><path d="M1777 1015v18" stroke="#1878e0" stroke-width="2.500"/>
<circle cx="1796" cy="1025" r="2" fill="none" stroke="#1878e0" stroke-width="1.500"/><path d="M1804 1024q2 0 1 3l-2 3" fill="none" stroke="#1878e0" stroke-width="2"/>
<rect x="1820" y="1016" width="6" height="12" rx="3"/><path d="M1818 1024q0 7 5 7t5-7M1823 1031v4" fill="none" stroke="#1878e0" stroke-width="1.500"/>
<rect x="1841" y="1021" width="14" height="11" fill="none" stroke="#1878e0" stroke-width="1.500" rx="1" transform="translate(0 -1)"/><path d="M1843 1023h10M1843 1026h10M1845 1029h6" stroke="#1878e0" stroke-width="1.500" stroke-dasharray="2 1"/>
<path d="M1864 1019l5-2h3l2 2 2-2h3l5 2-1 6-3-1v9h-12v-9l-3 1z"/>
<rect x="1889" y="1020" width="5.500" height="5.500" rx="1.500"/><rect x="1896.500" y="1019" width="5.500" height="5.500" rx="2.500"/><rect x="1889" y="1027" width="5.500" height="5.500" rx="1.500"/><rect x="1896.500" y="1027" width="5.500" height="5.500" rx="1.500"/>
</g></svg>
</div>
</body></html>
